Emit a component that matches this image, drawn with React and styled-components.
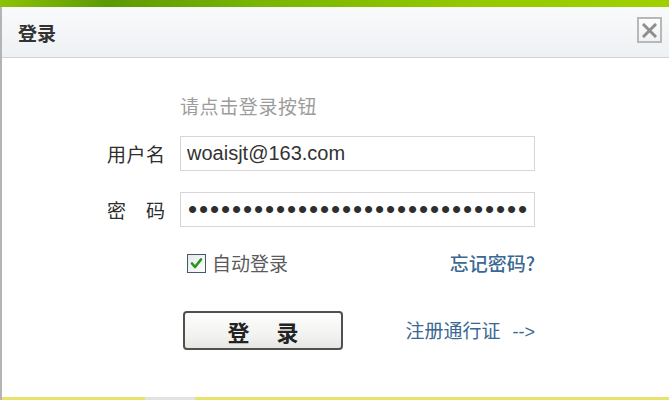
import React from 'react';
import styled, { createGlobalStyle } from 'styled-components';

const GlobalStyle = createGlobalStyle`
  html, body {
    margin: 0;
    padding: 0;
    background: #fff;
  }
  body {
    font-family: "Noto Sans CJK SC", "Liberation Sans", sans-serif;
  }
`;

const Dialog = styled.div`
  width: 669px;
  height: 400px;
  display: flex;
  flex-direction: column;
  box-sizing: border-box;
  overflow: hidden;
  background: #fff;
`;

const TopBar = styled.div`
  height: 7px;
  flex-shrink: 0;
  background: linear-gradient(to right, #8cc206 0%, #5c9a04 16%, #78b402 38%, #93c900 70%, #9fd100 100%);
`;

const Frame = styled.div`
  flex: 1;
  display: flex;
  flex-direction: column;
  border-left: 2px solid #b4b4b4;
`;

const Header = styled.div`
  height: 50px;
  flex-shrink: 0;
  display: flex;
  align-items: center;
  justify-content: space-between;
  padding: 0 7px 0 16px;
  border-bottom: 1px solid #d2d2d2;
  background: linear-gradient(to bottom, #f9fafb, #eef1f4);
`;

const Title = styled.h1`
  margin: 0;
  font-size: 19px;
  font-weight: 700;
  color: #333;
  line-height: 1;
`;

const CloseButton = styled.button`
  width: 25px;
  height: 26px;
  padding: 0;
  margin-top: -4px;
  display: flex;
  align-items: center;
  justify-content: center;
  border: 2px solid #b8b8b8;
  background: linear-gradient(to bottom, #fdfdfd, #f1f1f1);
  cursor: pointer;
`;

const Body = styled.div`
  flex: 1;
  padding: 38px 0 0 105px;
  display: flex;
  flex-direction: column;
`;

const Hint = styled.div`
  margin-left: 73px;
  height: 20px;
  line-height: 20px;
  font-size: 19px;
  letter-spacing: 0.6px;
  color: #9c9c9c;
`;

const FieldRow = styled.div`
  display: flex;
  align-items: center;
  margin-top: ${(p) => p.$gap}px;
`;

const Label = styled.label`
  width: 58px;
  margin-right: 15px;
  display: flex;
  justify-content: space-between;
  font-size: 19px;
  line-height: 20px;
  color: #2e2e2e;
`;

const Input = styled.input`
  width: 355px;
  height: 35px;
  box-sizing: border-box;
  border: 1px solid #d6d6d6;
  padding: 0 0 0 6px;
  margin: 0;
  font-family: "Liberation Sans", Arial, sans-serif;
  font-size: 20px;
  color: #333;
  background: #fff;
  outline: none;

  &[type='password'] {
    font-size: 26px;
    letter-spacing: 1.9px;
    padding-left: 7px;
    color: #2e2e2e;
  }
`;

const OptionRow = styled.div`
  width: 355px;
  margin: 26px 0 0 73px;
  display: flex;
  align-items: center;
  justify-content: space-between;
`;

const Remember = styled.label`
  display: flex;
  align-items: center;
  gap: 6px;
  margin-left: 7px;
  font-size: 19px;
  line-height: 20px;
  color: #5a5a5a;
`;

const CheckBox = styled.span`
  width: 17px;
  height: 17px;
  display: flex;
  align-items: center;
  justify-content: center;
  border: 1px solid #44596a;
  background: linear-gradient(to bottom right, #e6e9ee, #fdfdfd);
`;

const Link = styled.a`
  font-size: 19px;
  line-height: 20px;
  color: #3a6892;
  text-decoration: none;
  font-weight: ${(p) => (p.$strong ? 500 : 400)};
  cursor: pointer;
`;

const Arrow = styled.span`
  font-family: "Liberation Sans", Arial, sans-serif;
  font-size: 18px;
  margin-left: 12px;
`;

const ActionRow = styled.div`
  width: 355px;
  margin: 38px 0 0 73px;
  display: flex;
  align-items: center;
  justify-content: space-between;
`;

const LoginButton = styled.button`
  width: 160px;
  height: 39px;
  margin-left: 3px;
  box-sizing: border-box;
  display: flex;
  align-items: center;
  justify-content: center;
  gap: 27px;
  border: 2px solid #505050;
  border-radius: 4px;
  background: linear-gradient(to bottom, #fdfdfd 0%, #f3f3f1 60%, #e6e6e3 100%);
  font-family: "Noto Sans CJK SC", sans-serif;
  font-size: 22px;
  font-weight: 700;
  color: #222;
  padding: 0;
  cursor: pointer;
`;

const Footer = styled.div`
  height: 3px;
  flex-shrink: 0;
  display: flex;
`;

const FooterSegment = styled.div`
  width: ${(p) => (p.$width ? `${p.$width}px` : 'auto')};
  flex: ${(p) => (p.$width ? 'none' : 1)};
  background: ${(p) => p.$color};
`;

const CloseIcon = () => (
  <svg width="15" height="15" viewBox="0 0 15 15">
    <path d="M2 2 L13 13 M13 2 L2 13" stroke="#8e8e8e" strokeWidth="3" strokeLinecap="square" />
  </svg>
);

const CheckIcon = () => (
  <svg width="13" height="13" viewBox="0 0 13 13">
    <path d="M2 6.5 L5 10 L11 2.5" fill="none" stroke="#22961c" strokeWidth="2.6" strokeLinecap="round" strokeLinejoin="round" />
  </svg>
);

export default function App() {
  return (
    <>
      <GlobalStyle />
      <Dialog>
        <TopBar />
        <Frame>
          <Header>
            <Title>登录</Title>
            <CloseButton aria-label="关闭">
              <CloseIcon />
            </CloseButton>
          </Header>
          <Body>
            <Hint>请点击登录按钮</Hint>
            <FieldRow $gap={20}>
              <Label>
                <span>用</span>
                <span>户</span>
                <span>名</span>
              </Label>
              <Input type="text" defaultValue="woaisjt@163.com" />
            </FieldRow>
            <FieldRow $gap={21}>
              <Label>
                <span>密</span>
                <span>码</span>
              </Label>
              <Input type="password" defaultValue="aaaaaaaaaaaaaaaaaaaaaaaaaaaaaaa" readOnly />
            </FieldRow>
            <OptionRow>
              <Remember>
                <CheckBox>
                  <CheckIcon />
                </CheckBox>
                自动登录
              </Remember>
              <Link $strong>忘记密码?</Link>
            </OptionRow>
            <ActionRow>
              <LoginButton>
                <span>登</span>
                <span>录</span>
              </LoginButton>
              <Link>
                注册通行证<Arrow>--&gt;</Arrow>
              </Link>
            </ActionRow>
          </Body>
          <Footer>
            <FooterSegment $width={143} $color="#e7e36c" />
            <FooterSegment $width={50} $color="#e2e2e2" />
            <FooterSegment $color="#e7e36c" />
          </Footer>
        </Frame>
      </Dialog>
    </>
  );
}
